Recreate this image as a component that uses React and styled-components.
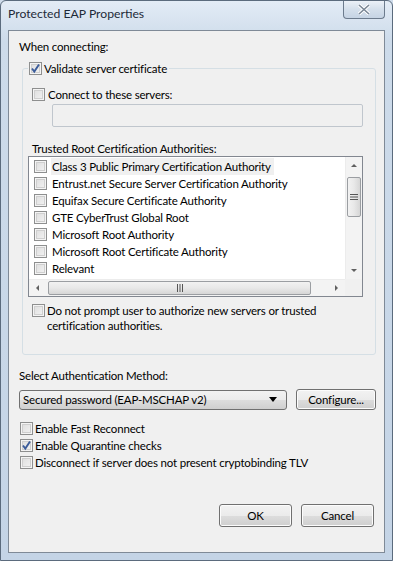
import React from "react";
import styled, { createGlobalStyle } from "styled-components";

const Global = createGlobalStyle`
  html, body {
    margin: 0;
    padding: 0;
    background: #cfdceb;
  }
  * { box-sizing: border-box; }
`;

const Window = styled.div`
  width: 393px;
  height: 561px;
  display: flex;
  flex-direction: column;
  border: 1px solid #5b6b7d;
  border-radius: 6px 6px 0 0;
  background: linear-gradient(180deg, #e3ecf6 0%, #cddbea 40px, #c4d4e6 100%);
  font-family: Lato, "Noto Sans", sans-serif;
  font-size: 11.5px;
  letter-spacing: -0.18px;
  color: #000;
  overflow: hidden;
`;

const TitleBar = styled.div`
  height: 29px;
  display: flex;
  align-items: flex-start;
  justify-content: space-between;
  padding-left: 7px;
`;

const Title = styled.div`
  margin-top: 5px;
  font-size: 12.2px;
  letter-spacing: 0;
  color: #1e2a38;
`;

const CloseButton = styled.div`
  width: 42px;
  height: 19px;
  margin-right: 7px;
  margin-top: -1px;
  border: 1px solid #6c7b8d;
  border-top: none;
  border-radius: 0 0 4px 4px;
  background: linear-gradient(180deg, #eef3f9 0%, #d5e0ec 50%, #c6d4e4 100%);
  display: flex;
  align-items: center;
  justify-content: center;
`;

const Client = styled.div`
  flex: 1;
  margin: 0 7px 7px 7px;
  border: 1px solid #7f8a97;
  background: #f0f0f0;
  padding: 8px 0 0 10px;
  display: flex;
  flex-direction: column;
`;

const Label = styled.div`
  line-height: 15px;
  height: 15px;
  margin-top: ${(p) => p.$top || 0}px;
`;

const Group = styled.fieldset`
  margin: 7px 0 0 3px;
  width: 354px;
  height: 294px;
  border: 1px solid #d5dfe5;
  border-radius: 3px;
  padding: 0 0 0 9px;
  display: flex;
  flex-direction: column;
`;

const Legend = styled.legend`
  padding: 0 2px 0 1px;
  margin-left: -4px;
  display: flex;
  align-items: center;
  gap: 2px;
  line-height: 15px;
`;

const CheckRow = styled.div`
  display: flex;
  align-items: ${(p) => (p.$top ? "flex-start" : "center")};
  gap: ${(p) => p.$gap || 3}px;
  line-height: 15px;
  margin-top: ${(p) => p.$mt || 0}px;
  min-height: 17px;
`;

const Box = styled.span`
  flex: none;
  width: 13px;
  height: 13px;
  border: 1px solid #8e8f8f;
  background: linear-gradient(135deg, #dcdcdc 0%, #f4f4f4 100%);
  box-shadow: inset 0 0 0 1px #f4f4f4, inset 0 0 0 2px #cfcfcf;
  display: flex;
  align-items: center;
  justify-content: center;
  margin-top: ${(p) => p.$mt || 0}px;
`;

const Check = ({ checked, mt }) => (
  <Box $mt={mt}>
    {checked && (
      <svg width="11" height="11" viewBox="0 0 11 11">
        <path d="M2 5.5 L4.3 8.5 L9 1.5" fill="none" stroke="#3b5c9a" strokeWidth="1.9" />
      </svg>
    )}
  </Box>
);

const TextBox = styled.div`
  margin: 1px 0 0 20px;
  width: 311px;
  height: 23px;
  border: 1px solid #c0c6cd;
  border-radius: 2px;
  background: #f0f0f0;
`;

const List = styled.div`
  margin: 0 0 0 -4px;
  width: 335px;
  height: 141px;
  border: 1px solid #828790;
  background: #fff;
  display: grid;
  grid-template-columns: 1fr 17px;
  grid-template-rows: 1fr 17px;
`;

const Items = styled.div`
  padding: 1px 0 0 5px;
  overflow: hidden;
`;

const Item = styled.div`
  display: flex;
  align-items: center;
  gap: 4px;
  height: 17px;
  white-space: nowrap;
`;

const ItemText = styled.span`
  padding: 0 3px 0 1px;
  line-height: 17px;
  background: ${(p) => (p.$hot ? "#f0f0f0" : "transparent")};
`;

const VScroll = styled.div`
  background: #f3f3f3;
  border-left: 1px solid #ececec;
  display: flex;
  flex-direction: column;
  align-items: center;
`;

const HScroll = styled.div`
  background: #f3f3f3;
  border-top: 1px solid #ececec;
  display: flex;
  align-items: center;
`;

const Arrow = styled.div`
  flex: none;
  width: 17px;
  height: 17px;
  display: flex;
  align-items: center;
  justify-content: center;
`;

const VThumb = styled.div`
  width: 14px;
  height: 40px;
  margin-top: 3px;
  border: 1px solid #9b9ea2;
  border-radius: 2px;
  background: linear-gradient(90deg, #f2f2f2 0%, #e8e8e8 50%, #d6d6d6 100%);
  display: flex;
  align-items: center;
  justify-content: center;
`;

const HThumb = styled.div`
  width: 263px;
  height: 14px;
  margin-left: 2px;
  border: 1px solid #9b9ea2;
  border-radius: 2px;
  background: linear-gradient(180deg, #f2f2f2 0%, #e8e8e8 50%, #d6d6d6 100%);
  display: flex;
  align-items: center;
  justify-content: center;
`;

const Spacer = styled.div`
  flex: 1;
`;

const Corner = styled.div`
  background: #f0f0f0;
`;

const Row = styled.div`
  display: flex;
  align-items: center;
  gap: 9px;
  margin-top: ${(p) => p.$mt || 0}px;
`;

const Select = styled.div`
  width: 268px;
  height: 20px;
  border: 1px solid #707070;
  border-radius: 3px;
  background: linear-gradient(180deg, #f2f2f2 0%, #ebebeb 50%, #dddddd 51%, #cfcfcf 100%);
  display: flex;
  align-items: center;
  justify-content: space-between;
  padding: 0 9px 0 3px;
`;

const Button = styled.div`
  width: ${(p) => p.$w}px;
  height: ${(p) => p.$h || 23}px;
  border: 1px solid #707070;
  border-radius: 3px;
  background: linear-gradient(180deg, #f2f2f2 0%, #ebebeb 50%, #dddddd 51%, #cfcfcf 100%);
  box-shadow: inset 0 0 0 1px #fcfcfc;
  display: flex;
  align-items: center;
  justify-content: center;
`;

const Options = styled.div`
  margin: 10px 0 0 1px;
  display: flex;
  flex-direction: column;
`;

const Footer = styled.div`
  margin-top: auto;
  margin-bottom: 25px;
  padding-right: 10px;
  display: flex;
  justify-content: flex-end;
  gap: 9px;
`;

const certs = [
  "Class 3 Public Primary Certification Authority",
  "Entrust.net Secure Server Certification Authority",
  "Equifax Secure Certificate Authority",
  "GTE CyberTrust Global Root",
  "Microsoft Root Authority",
  "Microsoft Root Certificate Authority",
  "Relevant",
];

const Tri = ({ dir }) => {
  const pts = {
    up: "1,5 4,2 7,5",
    down: "1,2 4,5 7,2",
    left: "5,1 2,4 5,7",
    right: "2,1 5,4 2,7",
  }[dir];
  return (
    <svg width="8" height="8" viewBox="0 0 8 8">
      <polygon points={pts} fill="#606060" />
    </svg>
  );
};

const Grip = ({ vertical }) => (
  <svg width="8" height="8" viewBox="0 0 8 8">
    {[1, 3.5, 6].map((v) =>
      vertical ? (
        <line key={v} x1="0" x2="8" y1={v + 0.5} y2={v + 0.5} stroke="#555" strokeWidth="1" />
      ) : (
        <line key={v} y1="0" y2="8" x1={v + 0.5} x2={v + 0.5} stroke="#555" strokeWidth="1" />
      )
    )}
  </svg>
);

export default function App() {
  return (
    <>
      <Global />
      <Window>
        <TitleBar>
          <Title>Protected EAP Properties</Title>
          <CloseButton>
            <svg width="14" height="11" viewBox="0 0 14 11">
              <path d="M2 1 L12 10 M12 1 L2 10" stroke="#fff" strokeWidth="3.4" />
              <path d="M2 1 L12 10 M12 1 L2 10" stroke="#7a8796" strokeWidth="1.6" />
            </svg>
          </CloseButton>
        </TitleBar>
        <Client>
          <Label>When connecting:</Label>
          <Group>
            <Legend>
              <Check checked />
              Validate server certificate
            </Legend>
            <CheckRow $mt={10}>
              <Check />
              Connect to these servers:
            </CheckRow>
            <TextBox />
            <Label $top={14}>Trusted Root Certification Authorities:</Label>
            <List>
              <Items>
                {certs.map((c, i) => (
                  <Item key={c}>
                    <Check />
                    <ItemText $hot={i === 0}>{c}</ItemText>
                  </Item>
                ))}
              </Items>
              <VScroll>
                <Arrow>
                  <Tri dir="up" />
                </Arrow>
                <VThumb>
                  <Grip vertical />
                </VThumb>
                <Spacer />
                <Arrow>
                  <Tri dir="down" />
                </Arrow>
              </VScroll>
              <HScroll>
                <Arrow>
                  <Tri dir="left" />
                </Arrow>
                <HThumb>
                  <Grip />
                </HThumb>
                <Spacer />
                <Arrow>
                  <Tri dir="right" />
                </Arrow>
              </HScroll>
              <Corner />
            </List>
            <CheckRow $top $mt={6} $gap={2}>
              <Check mt={1} />
              <span>
                Do not prompt user to authorize new servers or trusted
                <br />
                certification authorities.
              </span>
            </CheckRow>
          </Group>
          <Label $top={13}>Select Authentication Method:</Label>
          <Row $mt={6}>
            <Select>
              <span>Secured password (EAP-MSCHAP v2)</span>
              <svg width="8" height="5" viewBox="0 0 8 5">
                <polygon points="0,0 8,0 4,5" fill="#000" />
              </svg>
            </Select>
            <Button $w={80} $h={21}>Configure...</Button>
          </Row>
          <Options>
            <CheckRow $gap={2}>
              <Check />
              Enable Fast Reconnect
            </CheckRow>
            <CheckRow $gap={2}>
              <Check checked />
              Enable Quarantine checks
            </CheckRow>
            <CheckRow $gap={2}>
              <Check />
              Disconnect if server does not present cryptobinding TLV
            </CheckRow>
          </Options>
          <Footer>
            <Button $w={73}>OK</Button>
            <Button $w={73}>Cancel</Button>
          </Footer>
        </Client>
      </Window>
    </>
  );
}
